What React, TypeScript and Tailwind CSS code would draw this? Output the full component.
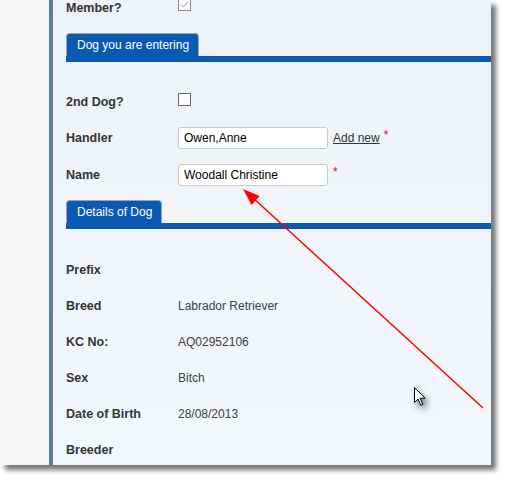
import React from "react";

/* Dog entry form: screenshot with frame shadow, arrow and pointer */

const font = { fontFamily: '"Liberation Sans", Arial, sans-serif' };

function Tab({ label }: { label: string }) {
  return (
    <div>
      <div className="flex">
        <div className="h-[23px] flex items-center pl-[10px] pr-[9px] rounded-t-[4px] border border-b-0 border-[#8fa6c4] bg-[#0a5ab4] text-white text-[12px] leading-none">
          {label}
        </div>
      </div>
      <div className="h-[6px] bg-[#0a5ab4]" />
    </div>
  );
}

function Label({ children }: { children: React.ReactNode }) {
  return (
    <div className="w-[112px] shrink-0 text-[12.5px] leading-[16px] font-bold text-[#353535]">
      {children}
    </div>
  );
}

function Asterisk() {
  return <span className="text-red-600 text-[12px] leading-none -mt-[6px]">*</span>;
}

function TextBox({ value }: { value: string }) {
  return (
    <div className="w-[150px] h-[22px] flex items-center px-[5px] bg-white border border-[#c9c9c9] rounded-[3px] text-[12px] text-black">
      {value}
    </div>
  );
}

const details: [string, string][] = [
  ["Prefix", ""],
  ["Breed", "Labrador Retriever"],
  ["KC No:", "AQ02952106"],
  ["Sex", "Bitch"],
  ["Date of Birth", "28/08/2013"],
  ["Breeder", ""],
];

export default function App() {
  return (
    <div className="w-[505px] h-[480px] bg-white" style={font}>
      <div className="relative w-[491px] h-[465px] flex overflow-hidden shadow-[5px_5px_5px_rgba(0,0,0,0.55)]">
        {/* left strip */}
        <div className="w-[49px] bg-[#f7f7f7]" />
        <div className="w-[4px] bg-[#5a7ea6]" />

        {/* form */}
        <div className="flex-1 flex flex-col pl-[13px] bg-gradient-to-b from-[#eef1f6] to-[#f3f6fa]">
          <div className="flex h-[16px]">
            <Label>Member?</Label>
            <svg width="13" height="13" viewBox="0 0 13 13" className="-mt-[2px]">
              <rect x="0.5" y="0.5" width="12" height="12" fill="#fafafa" stroke="#8a8a8a" />
              <path d="M3 6.5 L5.5 9 L10 3.5" fill="none" stroke="#9a9a9a" strokeWidth="1" />
            </svg>
          </div>

          <div className="mt-[17px]">
            <Tab label="Dog you are entering" />
          </div>

          <div className="flex mt-[32px] h-[16px]">
            <Label>2nd Dog?</Label>
            <div className="w-[13px] h-[13px] -mt-px bg-white border border-[#6b6b6b]" />
          </div>

          <div className="flex items-center mt-[17px] h-[22px]">
            <Label>Handler</Label>
            <TextBox value="Owen,Anne" />
            <span className="ml-[5px] text-[12px] text-[#333] underline">Add new</span>
            <span className="ml-[4px] flex"><Asterisk /></span>
          </div>

          <div className="flex items-center mt-[15px] h-[22px]">
            <Label>Name</Label>
            <TextBox value="Woodall Christine" />
            <span className="ml-[5px] flex"><Asterisk /></span>
          </div>

          <div className="mt-[14px]">
            <Tab label="Details of Dog" />
          </div>

          <div className="mt-[23px] flex flex-col">
            {details.map(([k, v]) => (
              <div key={k} className="flex items-center h-[36px]">
                <Label>{k}</Label>
                <span className="text-[12px] text-[#404040]">{v}</span>
              </div>
            ))}
          </div>
        </div>

        {/* red annotation arrow */}
        <svg className="absolute inset-0 pointer-events-none" width="491" height="465">
          <line x1="483" y1="408" x2="252" y2="197" stroke="#ff0000" strokeWidth="1.5" />
          <polygon points="243,189 251.6,204.9 259.6,196.1" fill="#ff0000" />
        </svg>

        {/* mouse pointer */}
        <svg
          className="absolute left-[414px] top-[387px] drop-shadow-[3px_4px_3px_rgba(0,0,0,0.55)]"
          width="13"
          height="20"
          viewBox="0 0 13 20"
        >
          <path
            d="M0.5 0.5 L0.5 15.5 L4 12 L6.8 18.3 L8.8 17.4 L6.1 11.2 L11 11.2 Z"
            fill="#ffffff"
            stroke="#000000"
            strokeWidth="1"
            strokeLinejoin="miter"
          />
        </svg>
      </div>
    </div>
  );
}
